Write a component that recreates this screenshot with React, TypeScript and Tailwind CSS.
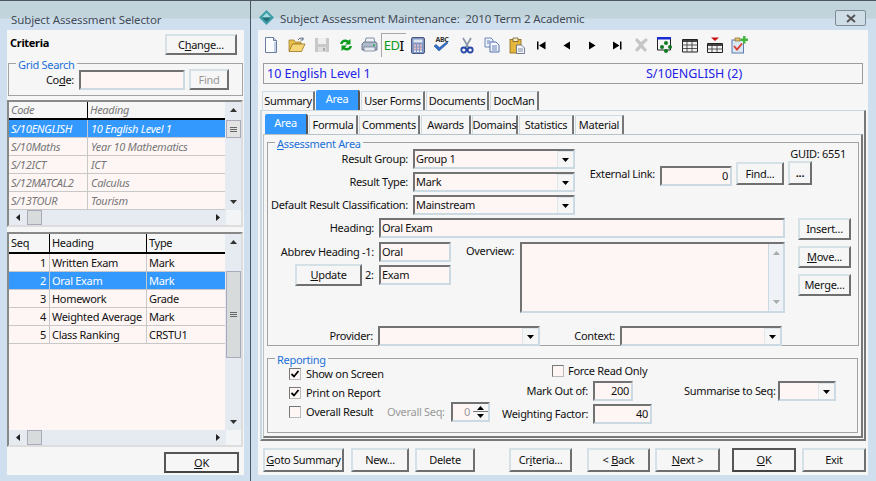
import type { ReactNode } from "react";

const raised =
  "border-2 border-t-[#d5e0e7] border-l-[#d5e0e7] border-r-[#6f6f6f] border-b-[#6f6f6f] bg-[#f6f6f6]";
const sunken =
  "border-2 border-t-[#727272] border-l-[#727272] border-r-[#cbdae2] border-b-[#cbdae2] bg-[#fef6f5]";

function Btn({ children, className = "" }: { children: ReactNode; className?: string }) {
  return <button className={`${raised} flex items-center justify-center whitespace-nowrap ${className}`}>{children}</button>;
}

function DefaultBtn({ children, className = "" }: { children: ReactNode; className?: string }) {
  return (
    <button className={`border-2 border-[#555] border-b-[#444] bg-[#f6f6f6] flex items-center justify-center ${className}`}>
      {children}
    </button>
  );
}

function Field({ value = "", className = "", right = false }: { value?: string; className?: string; right?: boolean }) {
  return (
    <div className={`${sunken} flex items-center px-[1px] overflow-hidden ${right ? "justify-end pr-[2px]" : ""} ${className}`}>
      {value}
    </div>
  );
}

function Arrow({ dir = "down", color = "#000" }: { dir?: "up" | "down" | "left" | "right"; color?: string }) {
  const pts = {
    up: "0,5 7,5 3.5,1",
    down: "0,1 7,1 3.5,5",
    left: "5,0 5,7 1,3.5",
    right: "1,0 1,7 5,3.5",
  }[dir];
  return (
    <svg width={dir === "left" || dir === "right" ? 6 : 7} height={dir === "left" || dir === "right" ? 7 : 6} viewBox={dir === "left" || dir === "right" ? "0 0 6 7" : "0 0 7 6"}>
      <polygon points={pts} fill={color} />
    </svg>
  );
}

function Combo({ value = "", className = "" }: { value?: string; className?: string }) {
  return (
    <div className={`${sunken} flex items-stretch ${className}`}>
      <div className="flex-1 flex items-center pl-[1px] overflow-hidden">{value}</div>
      <div className="w-[16px] bg-[#f6f6f6] border-l border-t border-[#dfe7ec] flex items-center justify-center">
        <Arrow />
      </div>
    </div>
  );
}

function Check({ on = false }: { on?: boolean }) {
  return (
    <div className="w-[12px] h-[12px] shrink-0 border border-t-[#777] border-l-[#777] border-r-[#bbb] border-b-[#bbb] bg-[#fef6f5] flex items-center justify-center">
      {on && (
        <svg width="10" height="10" viewBox="0 0 10 10">
          <path d="M1.5 5 L4 7.5 L8.5 2" fill="none" stroke="#000" strokeWidth="1.8" />
        </svg>
      )}
    </div>
  );
}

function Group({ title, className = "", children }: { title: ReactNode; className?: string; children: ReactNode }) {
  return (
    <fieldset className={`border border-[#a2a2a2] ${className}`}>
      <legend className="ml-[7px] px-[2px] pt-[2px] h-[14px] leading-[14px] text-[#1a70d8]">{title}</legend>
      {children}
    </fieldset>
  );
}

function VScroll({ thumb }: { thumb: "small" | "big" }) {
  return (
    <div className="w-[16px] bg-[#e6ebf2] flex flex-col items-center">
      <div className="h-[16px] flex items-center justify-center">
        <Arrow dir="up" color="#333" />
      </div>
      {thumb === "small" ? (
        <div className="w-[15px] h-[18px] mt-[2px] bg-[#e2e2e2] border border-[#aab] flex flex-col items-center justify-center gap-[1px]">
          <div className="w-[7px] h-[1px] bg-[#666]" />
          <div className="w-[7px] h-[1px] bg-[#666]" />
          <div className="w-[7px] h-[1px] bg-[#666]" />
        </div>
      ) : (
        <div className="w-[15px] h-[87px] mt-[21px] bg-[#d8dbdc] border border-[#aab] flex flex-col items-center justify-center gap-[1px]">
          <div className="w-[7px] h-[1px] bg-[#666]" />
          <div className="w-[7px] h-[1px] bg-[#666]" />
          <div className="w-[7px] h-[1px] bg-[#666]" />
        </div>
      )}
      <div className="flex-1" />
      <div className="h-[16px] flex items-center justify-center">
        <Arrow color="#333" />
      </div>
    </div>
  );
}

function HScroll() {
  return (
    <div className="h-[15px] flex">
      <div className="w-[217px] flex items-center bg-[#e6ebf2]">
        <div className="w-[18px] flex justify-center">
          <Arrow dir="left" color="#222" />
        </div>
        <div className="w-[15px] h-[15px] bg-[#d8dbdc] border border-[#aab]" />
        <div className="flex-1" />
        <div className="w-[16px] flex justify-center">
          <Arrow dir="right" color="#222" />
        </div>
      </div>
      <div className="flex-1 bg-[#f2f4f6]" />
    </div>
  );
}

const codes = [
  ["S/10ENGLISH", "10 English Level 1"],
  ["S/10Maths", "Year 10 Mathematics"],
  ["S/12ICT", "ICT"],
  ["S/12MATCAL2", "Calculus"],
  ["S/13TOUR", "Tourism"],
];

const seqs = [
  ["1", "Written Exam", "Mark"],
  ["2", "Oral Exam", "Mark"],
  ["3", "Homework", "Grade"],
  ["4", "Weighted Average", "Mark"],
  ["5", "Class Ranking", "CRSTU1"],
];

function IconNew() {
  return (
    <svg width="16" height="18" viewBox="0 0 16 18">
      <path d="M2.5 1.5h8l3 3v12h-11z" fill="#fbfcff" stroke="#6b7da0" />
      <path d="M10.5 1.5v3h3" fill="#cdd6ea" stroke="#6b7da0" />
      <path d="M11 16V6h2v10z" fill="#c4cfe6" />
    </svg>
  );
}
function IconOpen() {
  return (
    <svg width="18" height="16" viewBox="0 0 18 16">
      <path d="M1 3h5l1 2h6v2H5L1.5 14H1z" fill="#e9c04e" stroke="#9a7420" strokeWidth=".7" />
      <path d="M4.5 7H17l-3.5 7.5H1z" fill="#f6d777" stroke="#9a7420" strokeWidth=".8" />
      <path d="M10 3c1-2 3-2.2 5-1.5M15 .5v2.5h-2.5" fill="none" stroke="#5a6b86" strokeWidth="1" />
    </svg>
  );
}
function IconSave() {
  return (
    <svg width="16" height="16" viewBox="0 0 16 16">
      <path d="M1 1h14v14H1z" fill="#c8c8c8" />
      <path d="M4 1h8v6H4z" fill="#f0f0f0" />
      <path d="M4 10h8v5H4z" fill="#dedede" />
      <path d="M9 11h2v3H9z" fill="#aaa" />
    </svg>
  );
}
function IconRefresh() {
  return (
    <svg width="16" height="16" viewBox="0 0 16 16">
      <path d="M2 7c.5-3.5 4.5-6 8.5-3.5L12.500 2v5.500H7l2-2c-2.500-1.200-4-.2-4.500 1.500z" fill="#0c9a1c" />
      <path d="M14 9c-.5 3.500-4.500 6-8.500 3.500L3.500 14V8.500H9l-2 2c2.500 1.200 4 .2 4.500-1.500z" fill="#0c9a1c" />
    </svg>
  );
}
function IconPrint() {
  return (
    <svg width="17" height="16" viewBox="0 0 17 16">
      <path d="M5 1h8l1 5H4z" fill="#eef1f6" stroke="#69788f" strokeWidth=".8" />
      <path d="M1 7l2-2h12l1 2v6H1z" fill="#aebaca" stroke="#55657d" strokeWidth=".8" />
      <path d="M3 10h11v4H3z" fill="#e8ecf2" stroke="#55657d" strokeWidth=".6" />
      <path d="M12 7.500h2v1.500h-2z" fill="#19b34a" />
    </svg>
  );
}
function IconCalc() {
  return (
    <svg width="14" height="17" viewBox="0 0 14 17">
      <rect x=".5" y=".5" width="13" height="16" rx="1.500" fill="#8397c4" stroke="#47587f" />
      <rect x="2.500" y="2.500" width="9" height="3" fill="#dfe6f3" />
      <path d="M3 7.500h2v2H3zM6 7.500h2v2H6zM9 7.500h2v2H9zM3 10.500h2v2H3zM6 10.500h2v2H6zM9 10.500h2v2H9z" fill="#e9bdc0" />
      <path d="M3 13.500h2v1.500H3zM6 13.500h2v1.500H6zM9 13.500h2v1.500H9z" fill="#eef0f5" />
    </svg>
  );
}
function IconSpell() {
  return (
    <div className="flex flex-col items-center h-[19px] w-[18px] overflow-hidden">
      <span className="text-[7px] leading-[7px] font-bold text-[#333] tracking-[-0.3px]">ABC</span>
      <svg width="18" height="11" viewBox="0 0 18 11" className="-mt-[1px]">
        <path d="M1 4l5 5 9-8-1.500-1L6.500 5.500 3 2.500z" fill="#2e6fc9" stroke="#1c3f88" strokeWidth=".5" />
      </svg>
    </div>
  );
}
function IconCut() {
  return (
    <svg width="14" height="17" viewBox="0 0 14 17">
      <path d="M3 1l5.500 9.500M11 1L5.500 10.500" stroke="#8b95a8" strokeWidth="1.700" fill="none" />
      <circle cx="3.800" cy="13" r="2.500" fill="none" stroke="#2848a8" strokeWidth="1.800" />
      <circle cx="10.200" cy="13" r="2.500" fill="none" stroke="#2848a8" strokeWidth="1.800" />
    </svg>
  );
}
function IconCopy() {
  return (
    <svg width="16" height="16" viewBox="0 0 16 16">
      <path d="M1 1h6l2 2v7H1z" fill="#eef3fb" stroke="#5d7cb2" strokeWidth=".9" />
      <path d="M6 5h6l3 3v7H6z" fill="#f6f9fe" stroke="#3f60a3" strokeWidth=".9" />
      <path d="M8 9h5M8 11h5M8 13h5M3 4h3M3 6h2" stroke="#3f60a3" strokeWidth=".8" />
    </svg>
  );
}
function IconPaste() {
  return (
    <svg width="16" height="17" viewBox="0 0 16 17">
      <rect x="1" y="2.500" width="11" height="13.500" fill="#e4b63e" stroke="#8a6a1c" strokeWidth=".8" />
      <path d="M4 1h5v3.500H4z" fill="#f6edc8" stroke="#6e5a20" strokeWidth=".8" />
      <path d="M7.500 8h5l3 3v5.500h-8z" fill="#f4f6fa" stroke="#55657d" strokeWidth=".8" />
      <path d="M9 12h5M9 14h5" stroke="#55657d" strokeWidth=".7" />
    </svg>
  );
}
function IconNav({ kind }: { kind: "first" | "prev" | "next" | "last" }) {
  return (
    <svg width="10" height="9" viewBox="0 0 10 9">
      {kind === "first" && <path d="M0 .5h1.500v8H0zM2 4.500L8.500.5v8z" fill="#000" />}
      {kind === "prev" && <path d="M1.500 4.500L8 .5v8z" fill="#000" />}
      {kind === "next" && <path d="M2 .5l6.500 4-6.500 4z" fill="#000" />}
      {kind === "last" && <path d="M1 .5l6.500 4-6.500 4zM8 .5h1.500v8H8z" fill="#000" />}
    </svg>
  );
}
function IconX() {
  return (
    <svg width="16" height="16" viewBox="0 0 16 16">
      <path d="M2 3l2-2 4 4 5-4 2 2-5 5 4 5-2 2-4-4-4 4-2-2 4-5z" fill="#c6c6c6" />
    </svg>
  );
}
function IconGrid() {
  return (
    <svg width="16" height="16" viewBox="0 0 16 16">
      <path d="M.5 .5h13v12.500H.5z" fill="#f5f5f5" stroke="#222" />
      <path d="M0 0h14v2.500H0z" fill="#1b2bd8" />
      <circle cx="9" cy="6" r="2" fill="#0d7a22" />
      <circle cx="5" cy="10" r="2" fill="#0d7a22" />
      <circle cx="13" cy="10" r="2" fill="#0d7a22" />
      <circle cx="9" cy="14" r="2" fill="#0d7a22" />
    </svg>
  );
}
function IconTable({ marker = false }: { marker?: boolean }) {
  return (
    <svg width="16" height="18" viewBox="0 0 16 18">
      {marker && <path d="M4 1.500h8L8 5z" fill="#c41010" />}
      <path d={marker ? "M.5 7.500h15v9H.5z" : "M.5 3.500h15v12.500H.5z"} fill="#f0f0f0" stroke="#222" />
      <path d={marker ? "M1 8h14v2H1z" : "M1 4h14v2H1z"} fill="#444" />
      <path d={marker ? "M0 13h16M5 8v8M10 8v8" : "M0 9h16M0 12.500h16M5 4v12M10 4v12"} stroke="#333" strokeWidth=".8" fill="none" />
    </svg>
  );
}
function IconAddCheck() {
  return (
    <svg width="17" height="18" viewBox="0 0 17 18">
      <rect x="1" y="4" width="11.500" height="13" fill="#dbe6f3" stroke="#5d7cb2" />
      <path d="M4 2h5v3H4z" fill="#e4c27a" stroke="#8a6a1c" strokeWidth=".7" />
      <path d="M3 10l3 3.500 5-6" fill="none" stroke="#d93a2b" strokeWidth="1.800" />
      <path d="M12 0h2.500v2.500H17V5h-2.500v2.500H12V5H9.500V2.500H12z" fill="#45b53f" />
    </svg>
  );
}

const tools: { w: string; icon: ReactNode }[] = [
  { w: "w-[26px]", icon: <IconNew /> },
  { w: "w-[26px]", icon: <IconOpen /> },
  { w: "w-[24px]", icon: <IconSave /> },
  { w: "w-[23px]", icon: <IconRefresh /> },
  { w: "w-[24px]", icon: <IconPrint /> },
  {
    w: "w-[25px]",
    icon: (
      <div className="w-[25px] h-[24px] border-t border-l border-[#a8a8a8] flex items-center justify-center">
        <span className="text-[#0c9a1c] text-[13px] leading-none tracking-[-0.6px]">ED</span>
        <span className="text-black text-[15px] leading-none">I</span>
      </div>
    ),
  },
  { w: "w-[24px]", icon: <IconCalc /> },
  { w: "w-[24px]", icon: <IconSpell /> },
  { w: "w-[25px]", icon: <IconCut /> },
  { w: "w-[25px]", icon: <IconCopy /> },
  { w: "w-[25px]", icon: <IconPaste /> },
  { w: "w-[25px]", icon: <IconNav kind="first" /> },
  { w: "w-[25px]", icon: <IconNav kind="prev" /> },
  { w: "w-[25px]", icon: <IconNav kind="next" /> },
  { w: "w-[25px]", icon: <IconNav kind="last" /> },
  { w: "w-[24px]", icon: <IconX /> },
  { w: "w-[24px]", icon: <IconGrid /> },
  { w: "w-[25px]", icon: <IconTable /> },
  { w: "w-[25px]", icon: <IconTable marker /> },
  { w: "w-[25px]", icon: <IconAddCheck /> },
];

const outerTabs = [
  { label: "Summary", w: "w-[53px]" },
  { label: "Area", w: "w-[44px]", on: true },
  { label: "User Forms", w: "w-[64px]" },
  { label: "Documents", w: "w-[63px]" },
  { label: "DocMan", w: "w-[49px]" },
];

const innerTabs = [
  { label: "Area", w: "w-[43px]", on: true },
  { label: "Formula", w: "w-[49px]" },
  { label: "Comments", w: "w-[61px]" },
  { label: "Awards", w: "w-[50px]" },
  { label: "Domains", w: "w-[46px]" },
  { label: "Statistics", w: "w-[55px]" },
  { label: "Material", w: "w-[49px]" },
];

function Tab({ label, w, on }: { label: string; w: string; on?: boolean }) {
  return on ? (
    <div className={`${w} h-[20px] bg-[#3399ff] text-white rounded-t-[2px] flex items-center justify-center pb-[3px] border-r-2 border-[#555]`}>
      {label}
    </div>
  ) : (
    <div className={`${w} h-[19px] mt-[1px] bg-[#f6f6f6] border-t border-l border-r-2 border-[#cfdbe2] border-r-[#777] flex items-center justify-center whitespace-nowrap`}>
      {label}
    </div>
  );
}

const titleBar = "bg-[linear-gradient(#c2d4db_0,#c2d4db_17px,#cfdfee_18px)]";

export default function App() {
  return (
    <div className="w-[876px] h-[481px] overflow-hidden flex bg-[#cfdfee] text-[11px] tracking-[-0.3px] leading-[14px] text-[#111] [font-family:'Noto_Sans',sans-serif]">
      {/* selector window */}
      <div className="w-[251px] shrink-0 flex flex-col border-r border-t border-[#4b565e] ">
        <div className={`h-[29px] pl-[11px] pt-[11px] text-[11.5px] tracking-[-0.12px] leading-[16px] text-[#444c55] ${titleBar}`}>
          Subject Assessment Selector
        </div>
        <div className="ml-[7px] w-[237px] h-[445px] bg-[#f6f6f6] flex flex-col">
          <div className="flex justify-between pl-[3px] pr-[7px] pt-[4px]">
            <span className="font-bold text-black pt-[2px]">Criteria</span>
            <Btn className="w-[72px] h-[21px]">
              C<u>h</u>ange...
            </Btn>
          </div>
          <Group title="Grid Search" className="ml-[1px] w-[235px] h-[40px] mt-[1px]">
            <div className="flex items-center -mt-[1px]">
              <span className="w-[65px] text-right">
                Co<u>d</u>e:
              </span>
              <Field className="ml-[5px] w-[106px] h-[20px]" />
              <Btn className="ml-[4px] w-[40px] h-[21px] text-[#999]">Find</Btn>
            </div>
          </Group>
          <div className="mt-[4px] w-[236px] h-[127px] border-2 border-t-[#888] border-l-[#888] border-r-[#ddd] border-b-[#ddd] flex flex-col">
            <div className="flex h-[110px]">
              <div className="w-[217px] bg-[#fef6f5] italic text-[#777]">
                <div className="flex h-[18px] bg-[#f6f6f6] border-b-2 border-black">
                  <div className="w-[79px] border-r border-black pl-[2px] flex items-center">Code</div>
                  <div className="flex-1 pl-[2px] flex items-center">Heading</div>
                </div>
                {codes.map((r, i) => (
                  <div key={r[0]} className={`flex h-[18px] border-b border-[#c8c8c8] ${i === 0 ? "bg-[#3399ff] text-white" : ""}`}>
                    <div className="w-[79px] border-r border-[#c8c8c8] pl-[2px] flex items-center">{r[0]}</div>
                    <div className="flex-1 pl-[3px] flex items-center">{r[1]}</div>
                  </div>
                ))}
              </div>
              <VScroll thumb="small" />
            </div>
            <HScroll />
          </div>
          <div className="mt-[5px] w-[236px] h-[215px] border-2 border-t-[#888] border-l-[#888] border-r-[#ddd] border-b-[#ddd] flex flex-col">
            <div className="flex h-[198px]">
              <div className="w-[217px] bg-[#fef6f5]">
                <div className="flex h-[20px] bg-[#f6f6f6] border-b-2 border-black">
                  <div className="w-[41px] border-r border-black pl-[2px] flex items-center">Seq</div>
                  <div className="w-[97px] border-r border-black pl-[2px] flex items-center">Heading</div>
                  <div className="flex-1 pl-[2px] flex items-center">Type</div>
                </div>
                {seqs.map((r, i) => (
                  <div key={r[0]} className={`flex h-[18px] border-b border-[#c8c8c8] ${i === 1 ? "bg-[#3399ff] text-white" : ""}`}>
                    <div className="w-[41px] border-r border-[#c8c8c8] pr-[3px] flex items-center justify-end">{r[0]}</div>
                    <div className="w-[97px] border-r border-[#c8c8c8] pl-[2px] flex items-center whitespace-nowrap">{r[1]}</div>
                    <div className="flex-1 pl-[2px] flex items-center">{r[2]}</div>
                  </div>
                ))}
              </div>
              <VScroll thumb="big" />
            </div>
            <HScroll />
          </div>
          <div className="flex justify-end pr-[5px] pt-[5px]">
            <DefaultBtn className="w-[75px] h-[21px]">
              <u>O</u>K
            </DefaultBtn>
          </div>
        </div>
      </div>

      {/* maintenance window */}
      <div className="flex-1 flex flex-col border-t border-[#4b565e]">
        <div className={`h-[29px] flex items-start pl-[8px] pr-[10px] pt-[9px] ${titleBar}`}>
          <svg width="15" height="15" viewBox="0 0 15 15" className="shrink-0">
            <path d="M7.500 0L15 7.500 7.500 15 0 7.500z" fill="#3f9ea6" />
            <path d="M7.500 3L12 7.500H3z" fill="#a8dde0" />
            <path d="M7.500 12L12 7.500H3z" fill="#246d7a" />
          </svg>
          <span className="ml-[6px] pt-[1px] text-[11.5px] tracking-[-0.12px] leading-[16px] text-[#444c55] whitespace-pre">
            Subject Assessment Maintenance:  2010 Term 2 Academic
          </span>
          <div className="ml-auto w-[31px] h-[16px] border border-[#7d8b96] rounded-[2px] bg-[#cfdde6] flex items-center justify-center">
            <svg width="12" height="9" viewBox="0 0 12 9">
              <path d="M2 1l8 7M10 1L2 8" stroke="#555" strokeWidth="2" fill="none" />
            </svg>
          </div>
        </div>
        <div className="ml-[7px] w-[610px] h-[445px] bg-[#f6f6f6] flex flex-col">
          <div className="h-[33px] flex items-center pb-[3px]">
            {tools.map((t, i) => (
              <div key={i} className={`${t.w} h-[24px] flex items-center justify-center`}>
                {t.icon}
              </div>
            ))}
          </div>
          <div className="ml-[5px] w-[600px] h-[21px] shrink-0 border border-[#9c9c9c] flex items-center text-[12.5px] tracking-normal text-[#2222e6]">
            <span className="w-[382px] pl-[3px]">10 English Level 1</span>
            <span>S/10ENGLISH (2)</span>
          </div>
          <div className="flex gap-[1px] ml-[4px] mt-[6px] h-[20px]">
            {outerTabs.map((t) => (
              <Tab key={t.label} {...t} />
            ))}
          </div>
          <div className="ml-[2px] w-[606px] h-[331px] border-t border-[#c9d8df] border-l-2 border-r-2 border-l-[#c9d8df] border-r-[#777] border-b-2 border-b-[#777] flex flex-col">
            <div className="flex gap-[1px] ml-[3px] mt-[3px] h-[20px] shrink-0">
              {innerTabs.map((t) => (
                <Tab key={t.label} {...t} />
              ))}
            </div>
            <div className="ml-[1px] w-[600px] h-[304px] border border-[#b8c4cb] border-r-2 border-r-[#777] border-b-2 border-b-[#777] px-[3px]">
              <Group
                title={
                  <>
                    <u>A</u>ssessment Area
                  </>
                }
                className="w-[591px] h-[211px]"
              >
                <div className="flex">
                  <div className="w-[308px] flex flex-col gap-[3px]">
                    {[
                      ["Result Group:", "Group 1"],
                      ["Result Type:", "Mark"],
                      ["Default Result Classification:", "Mainstream"],
                    ].map(([l, v]) => (
                      <div key={l} className="flex items-center h-[20px]">
                        <span className="w-[140px] text-right whitespace-nowrap">{l}</span>
                        <Combo value={v} className="ml-[5px] w-[162px] h-[20px]" />
                      </div>
                    ))}
                  </div>
                  <div className="flex flex-col items-end w-[282px]">
                    <div className="pr-[12px] h-[13px] leading-[13px] -mt-[2px]">GUID: 6551</div>
                    <div className="flex items-start h-[24px] mt-[1px]">
                      <span className="pr-[5px] pt-[6px] whitespace-nowrap">External Link:</span>
                      <Field value="0" right className="mt-[5px] w-[72px] h-[20px]" />
                      <Btn className="ml-[4px] mt-[1px] w-[48px] h-[23px]">Find...</Btn>
                      <Btn className="ml-[4px] w-[24px] h-[24px] font-bold">...</Btn>
                      <div className="w-[46px]" />
                    </div>
                  </div>
                </div>
                <div className="flex mt-[3px]">
                  <div className="w-[518px]">
                    <div className="flex items-center h-[20px]">
                      <span className="w-[106px] text-right">Heading:</span>
                      <Field value="Oral Exam" className="ml-[5px] w-[406px] h-[20px]" />
                    </div>
                    <div className="flex mt-[4px]">
                      <div className="w-[183px]">
                        <div className="flex items-center h-[20px]">
                          <span className="w-[106px] text-right whitespace-nowrap">Abbrev Heading -1:</span>
                          <Field value="Oral" className="ml-[5px] w-[72px] h-[20px]" />
                        </div>
                        <div className="flex items-center h-[22px] mt-[2px]">
                          <Btn className="ml-[27px] w-[67px] h-[22px]">
                            <u>U</u>pdate
                          </Btn>
                          <span className="ml-[3px] w-[9px]">2:</span>
                          <Field value="Exam" className="ml-[5px] w-[72px] h-[20px]" />
                        </div>
                      </div>
                      <span className="ml-[15px] w-[54px] pt-[2px]">Overview:</span>
                      <div className={`${sunken} w-[265px] h-[71px] flex justify-end`}>
                        <div className="w-[15px] bg-[#eef1f5] border-l border-[#cbdae2] flex flex-col items-center justify-between py-[6px]">
                          <Arrow dir="up" color="#aaa" />
                          <Arrow color="#aaa" />
                        </div>
                      </div>
                    </div>
                  </div>
                  <div className="ml-[12px] flex flex-col gap-[6px]">
                    <Btn className="w-[53px] h-[22px]">Insert...</Btn>
                    <Btn className="w-[53px] h-[22px]">
                      <u>M</u>ove...
                    </Btn>
                    <Btn className="w-[53px] h-[22px]">
                      Mer<u>g</u>e...
                    </Btn>
                  </div>
                </div>
                <div className="flex items-center mt-[13px]">
                  <span className="w-[105px] text-right">Provider:</span>
                  <Combo className="ml-[5px] w-[162px] h-[20px]" />
                  <span className="ml-[33px] w-[42px] text-right">Context:</span>
                  <Combo className="ml-[5px] w-[162px] h-[20px]" />
                </div>
              </Group>
              <Group title="Reporting" className="w-[591px] h-[82px] mt-[5px]">
                <div className="flex -mt-[1px]">
                  <div className="ml-[21px] w-[98px] flex flex-col gap-[1px] pt-[1px] whitespace-nowrap">
                    <div className="flex items-center gap-[5px] h-[18px]">
                      <Check on />
                      Show on Screen
                    </div>
                    <div className="flex items-center gap-[5px] h-[18px]">
                      <Check on />
                      Print on Report
                    </div>
                    <div className="flex items-center gap-[5px] h-[18px]">
                      <Check />
                      Overall Result
                    </div>
                  </div>
                  <div className="w-[103px] flex items-end justify-between pb-[2px]">
                    <span className="text-[#999] pb-[3px] whitespace-nowrap">Overall Seq:</span>
                    <div className={`${sunken} w-[39px] h-[20px] flex text-[#999]`}>
                      <span className="flex-1 text-right pr-[3px] pt-[1px]">0</span>
                      <div className="w-[15px] flex flex-col bg-[#f6f6f6]">
                        <div className="h-[8px] flex items-center justify-center border-b border-[#777]">
                          <Arrow dir="up" />
                        </div>
                        <div className="h-[8px] flex items-center justify-center">
                          <Arrow />
                        </div>
                      </div>
                    </div>
                  </div>
                  <div className="ml-[12px] w-[150px] flex flex-col">
                    <div className="ml-[50px] flex items-center gap-[4px] h-[14px]">
                      <Check />
                      <span className="whitespace-nowrap">Force Read Only</span>
                    </div>
                    <div className="flex items-center h-[20px] mt-[3px]">
                      <span className="w-[86px] text-right whitespace-nowrap">Mark Out of:</span>
                      <Field value="200" right className="ml-[5px] w-[40px] h-[20px]" />
                    </div>
                    <div className="flex items-center h-[20px] mt-[3px]">
                      <span className="w-[86px] text-right whitespace-nowrap">Weighting Factor:</span>
                      <Field value="40" right className="ml-[5px] w-[59px] h-[20px]" />
                    </div>
                  </div>
                  <div className="ml-[32px] flex items-center h-[20px] mt-[17px]">
                    <span className="w-[89px] whitespace-nowrap">Summarise to Seq:</span>
                    <Combo className="ml-[5px] w-[58px] h-[20px]" />
                  </div>
                </div>
              </Group>
            </div>
          </div>
          <div className="flex items-start ml-[5px] mt-[7px]">
            <Btn className="w-[81px] h-[24px]">
              <span>
                <u>G</u>oto Summary
              </span>
            </Btn>
            <Btn className="ml-[7px] w-[58px] h-[24px]">New...</Btn>
            <Btn className="ml-[6px] w-[60px] h-[24px]">Delete</Btn>
            <Btn className="ml-[34px] w-[63px] h-[24px]">
              <span>
                Cr<u>i</u>teria...
              </span>
            </Btn>
            <Btn className="ml-[15px] w-[63px] h-[24px]">
              <span>
                &lt; <u>B</u>ack
              </span>
            </Btn>
            <Btn className="ml-[5px] w-[65px] h-[24px]">
              <span>
                <u>N</u>ext &gt;
              </span>
            </Btn>
            <DefaultBtn className="ml-[12px] w-[64px] h-[24px]">
              <u>O</u>K
            </DefaultBtn>
            <Btn className="ml-[6px] w-[64px] h-[24px]">Exit</Btn>
          </div>
        </div>
      </div>
    </div>
  );
}
